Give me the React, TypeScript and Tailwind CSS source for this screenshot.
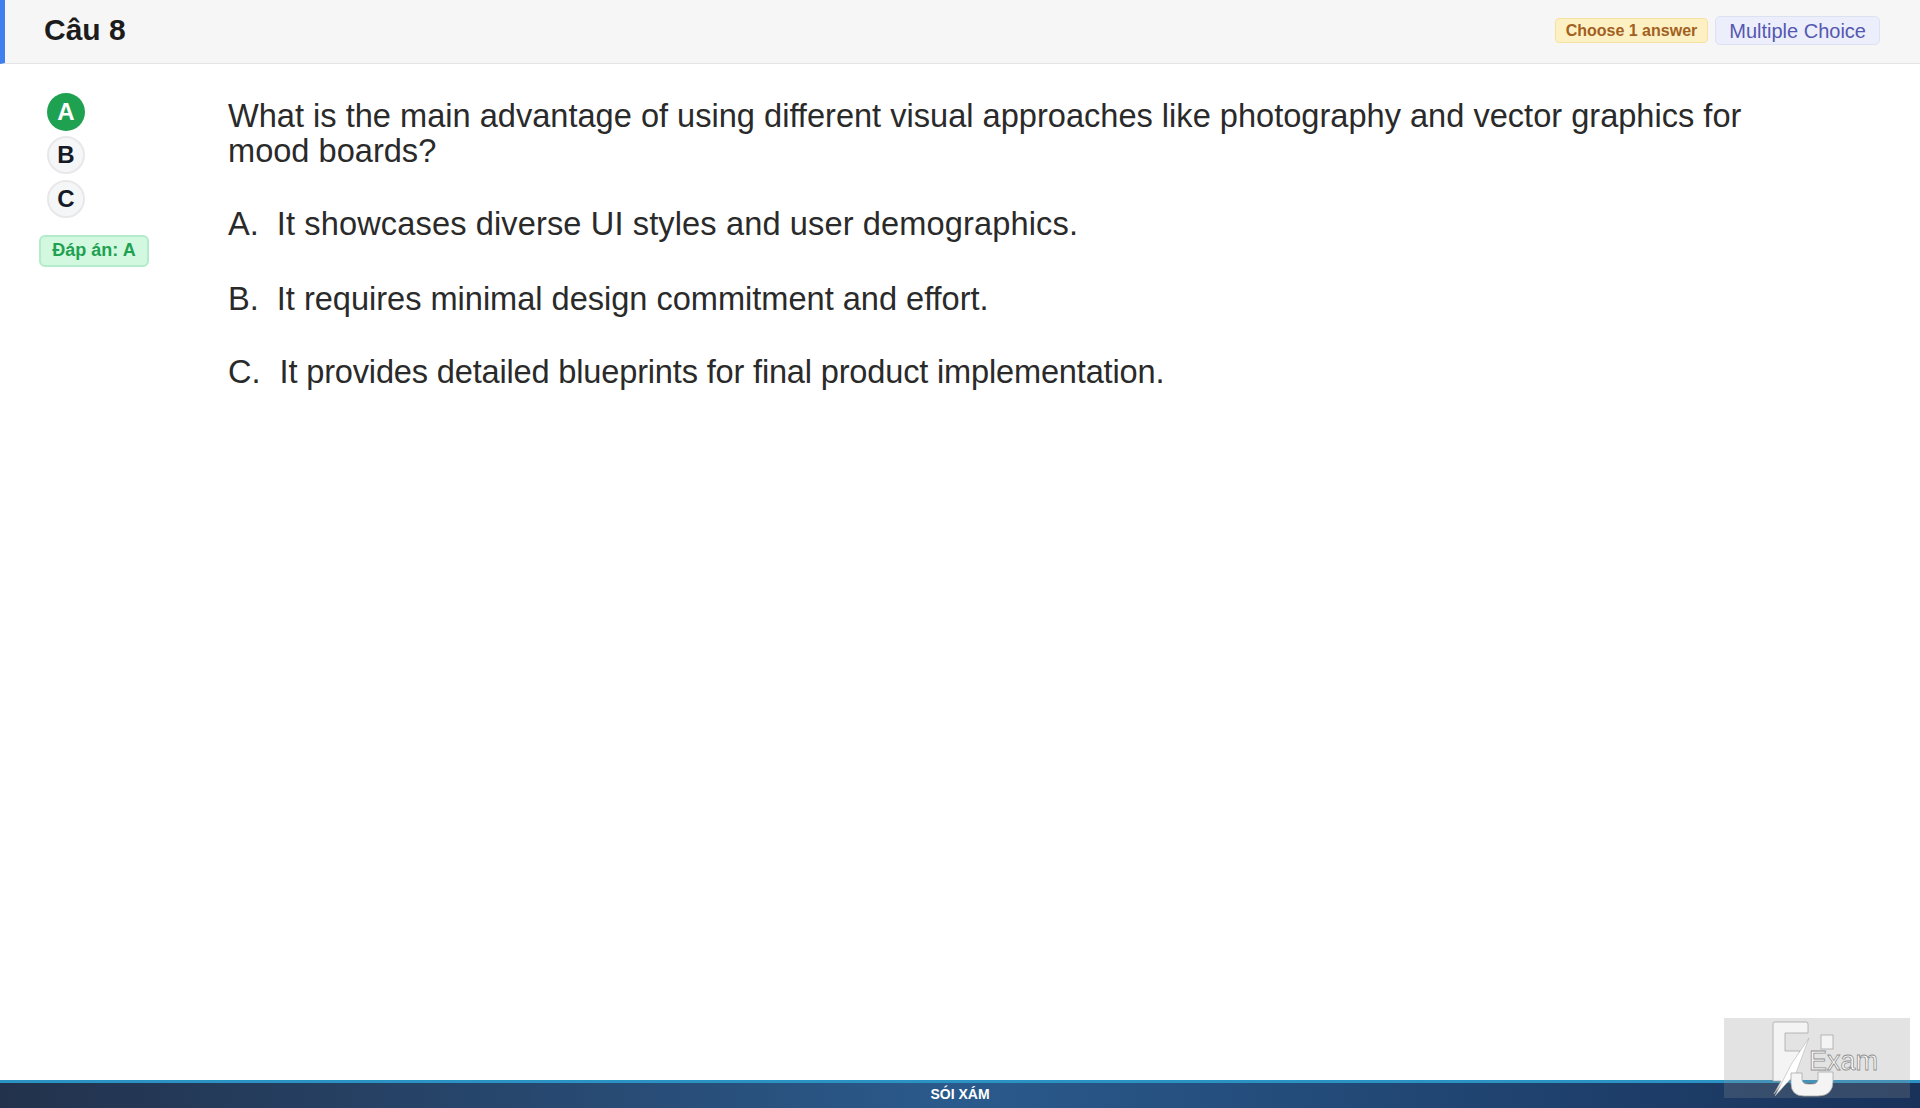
const options = [
  { key: "A", text: "It showcases diverse UI styles and user demographics.", cls: "mb-[39px] tracking-[0.12px]", prefix: "mr-[18px] tracking-normal" },
  { key: "B", text: "It requires minimal design commitment and effort.", cls: "mb-[37px] tracking-[-0.02px]", prefix: "mr-[18px] tracking-normal" },
  { key: "C", text: "It provides detailed blueprints for final product implementation.", cls: "tracking-[-0.18px]", prefix: "mr-[19px] tracking-normal" },
];

function FuExamLogo() {
  return (
    <div className="absolute right-[10px] bottom-[10px] w-[186px] h-[80px] bg-[#8f8f8f]/25">
      <svg className="absolute left-[48px] top-[3px]" width="70" height="76" viewBox="0 0 70 76" fill="#f4f4f4" stroke="#a8a8a8" strokeWidth="0.8">
        <path d="M3 1 H34 Q36 1 36 3 V12 H13 V30 H28 L20 50 L2 73 L9 60 H1 V3 Q1 1 3 1 Z" />
        <path d="M20 42 L37 17 L24 52 L3 75 Z" fill="#ffffff" strokeWidth="0.5" />
        <path d="M19 52 H30 V58 Q30 63 36 63 H40 Q46 63 46 58 V51 H61 V60 Q61 75 46 75 H32 Q19 75 19 62 Z" />
        <rect x="49" y="14" width="12" height="14" />
      </svg>
      <span className="absolute left-[85px] top-[28px] text-[27px] leading-[30px] font-['Liberation_Sans',sans-serif] text-[#fafafa] [-webkit-text-stroke:0.8px_#909090]">Exam</span>
    </div>
  );
}

export default function App() {
  return (
    <div className="relative h-[1108px] flex flex-col bg-white overflow-hidden font-['Liberation_Sans',Arial,sans-serif]">
      <div className="flex items-center justify-between h-[64px] shrink-0 pl-[39px] pr-[40px] bg-[#f6f6f6] border-l-[5px] border-l-[#3f7fee] border-b border-b-[#e5e5e5]">
        <h2 className="text-[30px] font-bold text-[#1c1c1c] relative bottom-[2px]">Câu 8</h2>
        <div className="flex items-center gap-[7px] relative bottom-[1px]">
          <span className="flex items-center h-[25px] px-[10px] rounded-[4px] bg-[#fdf1c4] border border-[#f6e2a0] text-[16px] font-bold text-[#a2601e]">Choose 1 answer</span>
          <span className="flex items-center h-[29px] px-[13px] rounded-[5px] bg-[#eceffb] border border-[#dde2f3] text-[20px] text-[#5558b0]">Multiple Choice</span>
        </div>
      </div>

      <div className="flex flex-1">
        <div className="w-[228px] shrink-0 pt-[29px] pl-[39px]">
          <div className="flex flex-col gap-[6px] pl-[8px]">
            <div className="flex items-center justify-center w-[38px] h-[38px] rounded-full bg-[#1fa152] text-white text-[24px] font-bold">A</div>
            <div className="flex items-center justify-center w-[38px] h-[38px] -mt-[1px] rounded-full bg-[#f5f6f8] border-2 border-[#e8e8ea] text-[#141a26] text-[24px] font-bold">B</div>
            <div className="flex items-center justify-center w-[38px] h-[38px] rounded-full bg-[#f5f6f8] border-2 border-[#e8e8ea] text-[#141a26] text-[24px] font-bold">C</div>
          </div>
          <div className="flex items-center justify-center mt-[17px] w-[110px] h-[32px] pb-[2px] rounded-[6px] bg-[#d3f8e0] border-2 border-[#b4ebca] text-[18px] font-bold text-[#1fa152]">Đáp án: A</div>
        </div>

        <div className="flex-1 pt-[34px] pr-[170px] text-[32.6px] text-[#2a2a2a]">
          <p className="leading-[35px] mb-[38px]">What is the main advantage of using different visual approaches like photography and vector graphics for mood boards?</p>
          {options.map((o) => (
            <p key={o.key} className={`leading-[36px] ${o.cls}`}>
              <span className={o.prefix}>{o.key}.</span>
              {o.text}
            </p>
          ))}
        </div>
      </div>

      <div className="flex items-center justify-center h-[28px] shrink-0 border-t-[3px] border-t-[#2b93c4] pb-[2px] bg-gradient-to-r from-[#22324c] via-[#2a5a8c] to-[#18325a] text-[14px] font-bold text-white">SÓI XÁM</div>

      <FuExamLogo />
    </div>
  );
}
